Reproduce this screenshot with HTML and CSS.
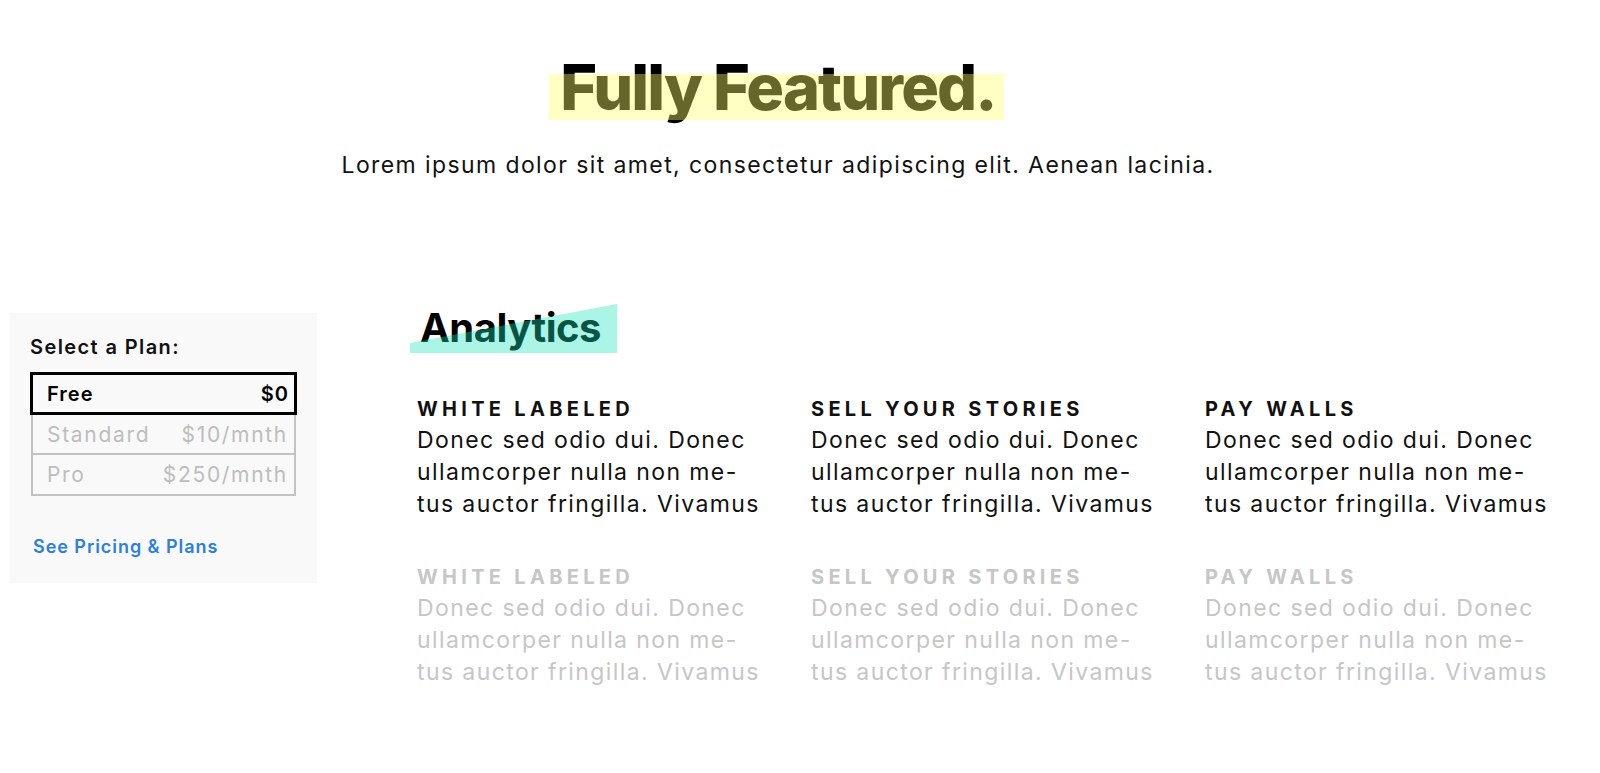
FILE: index.html
```html
<!DOCTYPE html>
<html lang="en">
<head>
<meta charset="utf-8">
<title>Fully Featured</title>
<link rel="stylesheet" href="styles.css">
</head>
<body>
  <header class="hero">
    <h1 class="hero-title"><span class="hl">Fully Featured.</span></h1>
    <p class="hero-sub">Lorem ipsum dolor sit amet, consectetur adipiscing elit. Aenean lacinia.</p>
  </header>

  <section class="content">
    <aside class="plan-card">
      <h3 class="plan-title">Select a Plan:</h3>
      <ul class="plans">
        <li class="plan plan-active"><span>Free</span><span>$0</span></li>
        <li class="plan"><span>Standard</span><span>$10/mnth</span></li>
        <li class="plan plan-last"><span>Pro</span><span>$250/mnth</span></li>
      </ul>
      <a class="plan-link" href="#">See Pricing &amp; Plans</a>
    </aside>

    <div class="features">
      <h2 class="section-title"><span class="deco">Analytics</span></h2>
      <div class="grid">
        <div class="feature">
          <h4>White Labeled</h4>
          <p>Donec sed odio dui. Donec<br>ullamcorper nulla non me-<br>tus auctor fringilla. Vivamus</p>
        </div>
        <div class="feature">
          <h4>Sell Your Stories</h4>
          <p>Donec sed odio dui. Donec<br>ullamcorper nulla non me-<br>tus auctor fringilla. Vivamus</p>
        </div>
        <div class="feature">
          <h4>Pay Walls</h4>
          <p>Donec sed odio dui. Donec<br>ullamcorper nulla non me-<br>tus auctor fringilla. Vivamus</p>
        </div>
        <div class="feature muted">
          <h4>White Labeled</h4>
          <p>Donec sed odio dui. Donec<br>ullamcorper nulla non me-<br>tus auctor fringilla. Vivamus</p>
        </div>
        <div class="feature muted">
          <h4>Sell Your Stories</h4>
          <p>Donec sed odio dui. Donec<br>ullamcorper nulla non me-<br>tus auctor fringilla. Vivamus</p>
        </div>
        <div class="feature muted">
          <h4>Pay Walls</h4>
          <p>Donec sed odio dui. Donec<br>ullamcorper nulla non me-<br>tus auctor fringilla. Vivamus</p>
        </div>
      </div>
    </div>
  </section>
</body>
</html>
```

FILE: styles.css
```css
* { box-sizing: border-box; }
html, body { margin: 0; padding: 0; background: #fff; }
body {
  font-family: Inter, "Liberation Sans", Arial, sans-serif;
  color: #111;
  width: 1600px;
  height: 773px;
  overflow: hidden;
}

.hero {
  padding: 55px 44px 0 0;
  text-align: center;
}
.hero-title {
  margin: 0;
  font-size: 63px;
  line-height: 64px;
  font-weight: 800;
  letter-spacing: -1.9px;
  color: #000;
}
.hl {
  position: relative;
  display: inline-block;
}
.hl::after {
  content: "";
  position: absolute;
  left: -11px;
  right: -8px;
  top: 19px;
  height: 46px;
  background: rgba(255, 255, 105, 0.4);
}
.hero-sub {
  margin: 30px 0 0;
  font-size: 23px;
  line-height: 32px;
  letter-spacing: 1.4px;
  color: #111;
}

.content {
  display: flex;
  margin-top: 132px;
  padding-left: 10px;
}

.plan-card {
  width: 307px;
  height: 270px;
  background: #f9f9f9;
  padding: 22px 20px 0 20px;
}
.plan-title {
  margin: 0;
  font-size: 20px;
  line-height: 24px;
  font-weight: 600;
  letter-spacing: 1.4px;
  color: #111;
}
.plans {
  list-style: none;
  margin: 13px 0 0;
  padding: 0;
  width: 267px;
}
.plan {
  display: flex;
  justify-content: space-between;
  align-items: center;
  height: 40px;
  padding: 0 6px 0 14px;
  border: 2px solid #c2c2c2;
  border-top: none;
  margin: 0 1px;
  font-size: 21px;
  letter-spacing: 1.7px;
  color: #bdbdbd;
}
.plan-last { height: 41px; }
.plan-active {
  height: 43px;
  margin: 0;
  border: 3px solid #000;
  padding: 0 5px 0 14px;
  color: #000;
  font-weight: 600;
  font-size: 20px;
  letter-spacing: 1px;
}
.plan-link {
  display: block;
  margin: 39px 0 0 3px;
  font-size: 18px;
  line-height: 24px;
  font-weight: 600;
  letter-spacing: 0.95px;
  color: #2c7fe0;
  text-decoration: none;
}

.features {
  padding-left: 100px;
}
.section-title {
  margin: -10px 0 0;
  padding-left: 3px;
  font-size: 40px;
  line-height: 50px;
  font-weight: 700;
  letter-spacing: -0.5px;
  color: #000;
}
.deco {
  position: relative;
  display: inline-block;
}
.deco::after {
  content: "";
  position: absolute;
  left: -10px;
  top: 1px;
  width: 207px;
  height: 49px;
  background: rgba(27, 228, 188, 0.37);
  clip-path: polygon(0 39px, 100% 0, 100% 100%, 0 100%);
}

.grid {
  display: grid;
  grid-template-columns: repeat(3, 394px);
  row-gap: 44px;
  margin-top: 43px;
}
.feature h4 {
  margin: 0;
  font-size: 20px;
  line-height: 27px;
  font-weight: 700;
  text-transform: uppercase;
  letter-spacing: 4.3px;
  color: #111;
}
.feature p {
  margin: 1px 0 0;
  font-size: 23px;
  line-height: 32px;
  letter-spacing: 1.4px;
  color: #111;
}
.feature.muted h4,
.feature.muted p {
  color: #c6c6c6;
}
```
